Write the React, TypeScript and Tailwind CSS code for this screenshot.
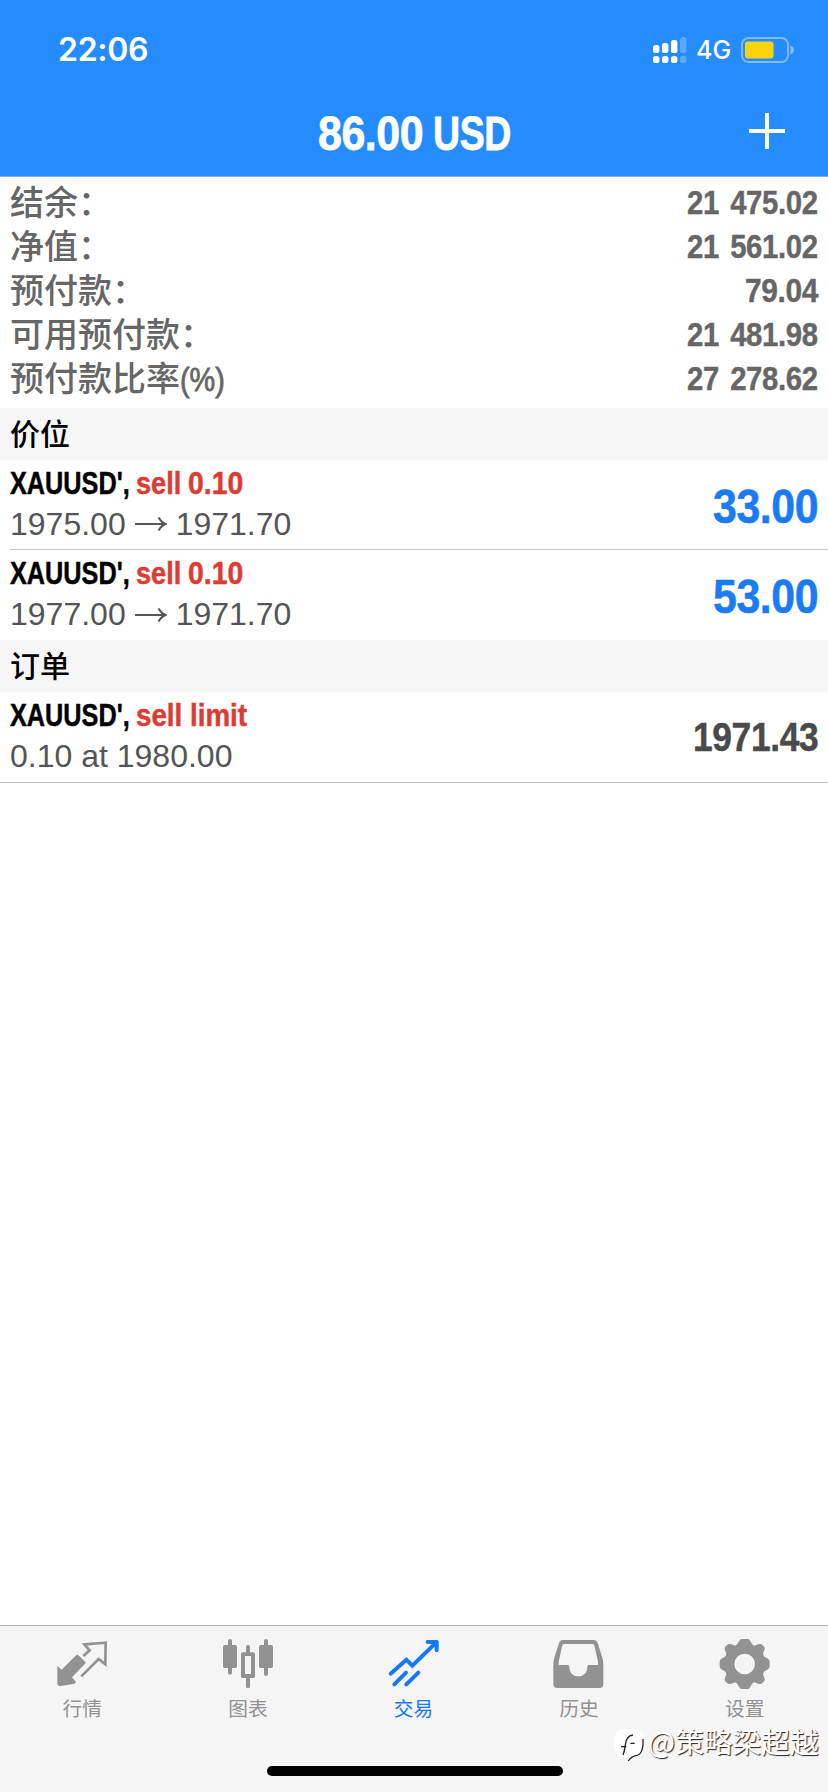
import React, { useLayoutEffect, useRef, useState } from 'react';
import clsx from 'clsx';

interface CondensedProps {
  text: string;
  width: number;
  className?: string;
}

// Squeezes bold text horizontally so that it fills exactly `width` pixels
const Condensed: React.FC<CondensedProps> = ({ text, width, className }) => {
  const ref = useRef<HTMLSpanElement>(null);
  const [scale, setScale] = useState(1);

  useLayoutEffect(() => {
    if (ref.current) setScale(width / ref.current.offsetWidth);
  }, [text, width]);

  return (
    <span className={clsx('inline-block whitespace-pre', className)} style={{ width }}>
      <span ref={ref} className="inline-block origin-left" style={{ transform: `scaleX(${scale})` }}>
        {text}
      </span>
    </span>
  );
};

const SUMMARY = [
  { label: '结余：', value: '21 475.02', width: 131 },
  { label: '净值：', value: '21 561.02', width: 131 },
  { label: '预付款：', value: '79.04', width: 73 },
  { label: '可用预付款：', value: '21 481.98', width: 131 },
  { label: '预付款比率', unit: '(%)', value: '27 278.62', width: 131 },
];

const POSITIONS = [
  { id: 1, open: '1975.00', current: '1971.70', profit: '33.00' },
  { id: 2, open: '1977.00', current: '1971.70', profit: '53.00' },
];

const StatusBar = () => (
  <div className="flex h-[88px] items-center justify-between pl-[58px] pr-[33px] pt-3 text-white">
    <span className="font-[Inter] text-[32px] font-semibold leading-none tracking-[-0.3px]">22:06</span>
    <div className="flex items-center">
      <svg width="34" height="28" viewBox="0 0 34 28" fill="currentColor">
        <rect x="0" y="9" width="6.4" height="8" rx="2.6" />
        <rect x="9" y="7" width="6.4" height="10" rx="2.6" />
        <rect x="18" y="4" width="6.4" height="13" rx="2.6" />
        <rect x="27" y="1" width="6.4" height="16" rx="2.6" opacity="0.25" />
        <rect x="0" y="20" width="6.4" height="7" rx="2.6" />
        <rect x="9" y="20" width="6.4" height="7" rx="2.6" />
        <rect x="18" y="20" width="6.4" height="7" rx="2.6" />
        <rect x="27" y="20" width="6.4" height="7" rx="2.6" opacity="0.25" />
      </svg>
      <span className="ml-[9px] w-[37px] font-[Inter] text-[25px] font-medium leading-none">4G</span>
      <svg className="ml-2" width="54" height="26" viewBox="0 0 54 26">
        <rect x="1" y="1" width="46" height="24" rx="6.5" fill="none" stroke="#fff" strokeOpacity="0.42" strokeWidth="2" />
        <rect x="4" y="4.5" width="28.5" height="17" rx="3" fill="#fbd30b" />
        <path d="M49.5 8.5c2 .6 3.5 2.300 3.500 4.500s-1.500 3.900-3.500 4.500z" fill="#fff" opacity="0.45" />
      </svg>
    </div>
  </div>
);

const SectionTitle: React.FC<{ children: React.ReactNode }> = ({ children }) => (
  <h2 className="flex h-[52px] items-center bg-[#f6f6f6] pl-[10px] text-[30px] font-medium text-black">{children}</h2>
);

const Arrow = () => (
  <svg className="mx-[9px] mb-1 inline-block" width="32" height="16" viewBox="0 0 32 16" fill="none" stroke="currentColor" strokeWidth="2">
    <path d="M0 8H30M23.500 1.500Q26.500 6.500 30.500 8Q26.500 9.500 23.500 14.500" />
  </svg>
);

const QuotesIcon = () => (
  <svg className="h-[52px] w-[52px] overflow-visible" viewBox="170 81 156 156">
    <path fill="#929292" d="M171 168L184 179L226 137Q231 132 236 137L257 158L215 202L227 217L222 221L180 228Q171 229 171 220Z" />
    <path fill="none" stroke="#929292" strokeWidth="8" d="M249 138L268 121L252 103L316 98L315 163L295 147L243 199" />
  </svg>
);

const ChartIcon = () => (
  <svg className="h-[52px] w-[52px] overflow-visible" viewBox="666 81 156 156" fill="#929292">
    <rect x="684" y="87" width="12" height="107" rx="6" />
    <rect x="669" y="105" width="42" height="69" rx="5" />
    <rect x="792" y="87" width="12" height="111" rx="6" />
    <rect x="777" y="105" width="42" height="69" rx="5" />
    <path d="M738 127V111a6 6 0 0 1 12 0V127H760a5 5 0 0 1 5 5V199a5 5 0 0 1-5 5H750V229a6 6 0 0 1-12 0V204H728a5 5 0 0 1-5-5V132a5 5 0 0 1 5-5ZM735 138V192H753V138Z" fillRule="evenodd" />
  </svg>
);

const TradeIcon = () => (
  <svg className="h-[52px] w-[52px] overflow-visible" viewBox="262 81 156 156" fill="none" stroke="#1578f5" strokeWidth="12" strokeLinecap="round">
    <path d="M270 191L317 149L335 167L407 97M281 223L316 188M317 223L353 188" />
    <path d="M381 96H408V121" strokeLinejoin="round" />
  </svg>
);

const HistoryIcon = () => (
  <svg className="h-[52px] w-[52px] overflow-visible" viewBox="761 81 156 156" fill="#929292" fillRule="evenodd">
    <path d="M789 90H879Q889 90 892 99L906 143Q909 153 909 164V222Q909 234 897 234H771Q759 234 759 222V164Q759 153 762 143L776 99Q779 90 789 90ZM794 102Q787 102 786 106L775 155V165H803Q807 165 807 171C807 188 818 199 834 199S861 188 861 171Q861 165 865 165H893V155L882 106Q881 102 874 102Z" />
  </svg>
);

const SettingsIcon = () => (
  <svg className="h-[52px] w-[52px] overflow-visible" viewBox="475 81 156 156" fill="#929292">
    <path
      fillRule="evenodd"
      d="M543 87H561Q566 87 569 94Q574 105 580 107Q588 104 596 102Q601 101 605 105L609 109Q613 113 612 118Q608 127 607 134Q610 141 620 145Q627 149 627 154V170Q627 175 620 179Q610 183 607 190Q608 197 612 206Q613 211 609 215L605 219Q601 223 596 222Q588 220 580 217Q574 219 569 230Q566 237 561 237H543Q538 237 535 230Q530 219 524 217Q516 220 508 222Q503 223 499 219L495 215Q491 211 492 206Q496 197 497 190Q494 183 484 179Q477 175 477 170V154Q477 149 484 145Q494 141 497 134Q496 127 492 118Q491 113 495 109L499 105Q503 101 508 102Q516 104 524 107Q530 105 535 94Q538 87 543 87ZM552 131A31 31 0 1 0 552 193A31 31 0 1 0 552 131Z"
    />
    <circle cx="552" cy="162" r="16" fill="none" stroke="#eee" strokeWidth="3" />
  </svg>
);

const TABS = [
  { label: '行情', Icon: QuotesIcon },
  { label: '图表', Icon: ChartIcon },
  { label: '交易', Icon: TradeIcon, active: true },
  { label: '历史', Icon: HistoryIcon },
  { label: '设置', Icon: SettingsIcon },
];

const App = () => (
  <div className="relative flex h-[1792px] w-[828px] flex-col overflow-hidden bg-white font-['Liberation_Sans','Noto_Sans_CJK_SC',sans-serif]">
    <header className="h-[177px] shrink-0 border-b border-[#7fabdf] bg-[#258cff]">
      <StatusBar />
      <div className="grid h-[88px] grid-cols-3 items-center text-white">
        <div />
        <h1 className="flex items-center justify-center pt-[2px] text-[49px] font-bold leading-none tracking-[-0.5px] [-webkit-text-stroke:0.8px_currentColor]">
          <Condensed text="86.00" width={105} />
          <Condensed text="USD" width={78} className="ml-[10px]" />
        </h1>
        <button className="mb-[2px] mr-[43px] justify-self-end" aria-label="add">
          <svg width="36" height="36" viewBox="0 0 36 36" stroke="#fff" strokeWidth="4">
            <path d="M18 0V36M0 18H36" />
          </svg>
        </button>
      </div>
    </header>

    <section className="h-[231px] shrink-0 pt-[3px] text-[#666]">
      {SUMMARY.map(({ label, unit, value, width }) => (
        <div key={label} className="flex h-11 items-center justify-between px-[10px]">
          <div className="flex pt-px text-[34px] font-medium leading-[42px]">
            <span>{label}</span>
            {unit && <Condensed text={unit} width={45} className="[-webkit-text-stroke:0.8px_currentColor]" />}
          </div>
          <Condensed text={value} width={width} className="text-[34px] font-bold leading-[43px] tracking-[-0.4px] [-webkit-text-stroke:0.4px_currentColor] [word-spacing:4px]" />
        </div>
      ))}
    </section>

    <SectionTitle>价位</SectionTitle>
    {POSITIONS.map(({ id, open, current, profit }) => (
      <div key={id} className="flex h-[90px] items-stretch pl-[10px]">
        <div className={clsx('flex flex-1 items-center justify-between pr-[10px]', id === 1 && 'border-b border-[#c4c4c8]')}>
          <div className="pb-[2px] text-[32px] leading-[41px]">
            <div className="flex font-bold [-webkit-text-stroke:0.5px_currentColor]">
              <Condensed text="XAUUSD'," width={120} className="text-black" />
              <Condensed text="sell" width={45} className="ml-[6px] text-[#db3d34]" />
              <Condensed text="0.10" width={55} className="ml-[7px] text-[#db3d34]" />
            </div>
            <div className="text-[#555557]">
              {open}
              <Arrow />
              {current}
            </div>
          </div>
          <Condensed text={profit} width={105} className="pt-[3px] text-[49px] font-bold leading-none tracking-[-0.5px] text-[#1b7bf5] [-webkit-text-stroke:0.6px_currentColor]" />
        </div>
      </div>
    ))}

    <SectionTitle>订单</SectionTitle>
    <div className="flex h-[91px] items-center justify-between border-b border-[#c4c4c8] px-[10px]">
      <div className="pb-[2px] text-[32px] leading-[41px]">
        <div className="flex font-bold [-webkit-text-stroke:0.5px_currentColor]">
          <Condensed text="XAUUSD'," width={120} className="text-black" />
          <Condensed text="sell limit" width={111} className="ml-[6px] text-[#db3d34]" />
        </div>
        <div className="text-[#555557]">0.10 at 1980.00</div>
      </div>
      <Condensed text="1971.43" width={125} className="text-[41px] font-bold leading-none tracking-[-0.4px] text-[#4a4a4d] [-webkit-text-stroke:0.5px_currentColor]" />
    </div>

    <nav className="mt-auto flex h-[167px] shrink-0 flex-col justify-between border-t border-[#b4b4b4] bg-[#f5f5f5] pb-4 pt-[11px]">
      <div className="grid grid-cols-5">
        {TABS.map(({ label, Icon, active }) => (
          <div key={label} className={clsx('flex flex-col items-center', active ? 'text-[#1578f5]' : 'text-[#929292]')}>
            <Icon />
            <span className="mr-px mt-2 text-[19.700px] leading-6">{label}</span>
          </div>
        ))}
      </div>
      <div className="ml-px h-[10px] w-[296px] self-center rounded-full bg-black" />
    </nav>

    <div className="absolute left-[614px] top-[1725px] flex items-start text-white">
      <svg className="mt-1" width="30" height="36" viewBox="0 0 90 108">
        <path d="M20 0H65Q86 1 88 18Q91 70 72 80Q60 82 48 97L44 88Q20 87 10 78Q0 68 0 42Q0 5 20 0Z" fill="#fff" />
        <path d="M21 53H37M27 78Q32 66 34 48Q36 20 57 18M49 43H62M87 30Q89 78 65 80Q50 84 43 96" fill="none" stroke="#222" strokeWidth="4" />
      </svg>
      <span className="ml-1 whitespace-nowrap font-['Noto_Sans_CJK_SC',sans-serif] text-[28.700px] leading-[32px] [text-shadow:1px_1px_1px_#222]">@策略梁超越</span>
    </div>
  </div>
);

export default App;
